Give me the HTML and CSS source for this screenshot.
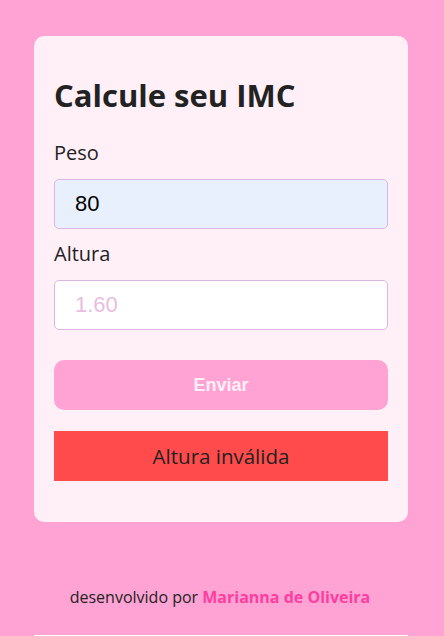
FILE: index.html
```html
<!DOCTYPE html>
<html lang="pt-BR">
<head>
<meta charset="utf-8">
<title>Calcule seu IMC</title>
<link rel="stylesheet" href="styles.css">
</head>
<body>
<main class="card">
  <h1 class="title">Calcule seu IMC</h1>
  <form class="form">
    <label class="label" for="peso">Peso</label>
    <input class="field field-filled" id="peso" type="text" value="80">
    <label class="label" for="altura">Altura</label>
    <input class="field" id="altura" type="text" placeholder="1.60">
    <button class="submit" type="button">Enviar</button>
  </form>
  <div class="result">Altura inválida</div>
</main>
<footer class="footer">desenvolvido por <strong class="author">Marianna de Oliveira</strong></footer>
<div class="extra"></div>
</body>
</html>
```
FILE: styles.css
```css
html, body {
  margin: 0;
  padding: 0;
  overflow: hidden;
}
body {
  background: #ffa3d4;
  font-family: "Open Sans", "Liberation Sans", sans-serif;
  color: #222;
}
.card {
  box-sizing: border-box;
  width: 374px;
  margin: 36px 0 0 34px;
  padding: 38px 20px 41px;
  background: #fff0f8;
  border-radius: 10px;
}
.title {
  margin: 0 0 23px;
  font-size: 31px;
  font-weight: 700;
  line-height: 42px;
  color: #222;
}
.form {
  display: flex;
  flex-direction: column;
}
.label {
  display: block;
  font-size: 20px;
  line-height: 27px;
  margin: 0 0 13px;
  color: #222;
}
.field {
  box-sizing: border-box;
  height: 50px;
  width: 100%;
  padding: 0 20px;
  border: 1px solid #dcb6e2;
  border-radius: 5px;
  background: #fff;
  font-family: "Liberation Sans", Arial, sans-serif;
  font-size: 22px;
  color: #000;
  outline: none;
  margin: 0 0 11px;
}
.field-filled {
  background: #e8f0fe;
}
.field::placeholder {
  color: #e8bde0;
}
#altura {
  margin-bottom: 30px;
}
.submit {
  height: 50px;
  width: 100%;
  border: none;
  border-radius: 10px;
  background: #ffa3d4;
  color: #fff0f8;
  font-family: "Liberation Sans", Arial, sans-serif;
  font-weight: 700;
  font-size: 18px;
  margin: 0;
  padding: 0;
}
.result {
  margin-top: 21px;
  height: 50px;
  display: flex;
  align-items: center;
  justify-content: center;
  background: #ff4b4b;
  font-size: 20.5px;
  color: #222;
}
.footer {
  margin-top: 64px;
  padding-right: 4px;
  text-align: center;
  font-size: 16px;
  line-height: 22px;
  color: #222;
}
.author {
  color: #ff3da0;
  font-weight: 700;
}
.extra {
  width: 374px;
  margin: 27px 0 0 34px;
  height: 50px;
  background: #fff;
}
```
